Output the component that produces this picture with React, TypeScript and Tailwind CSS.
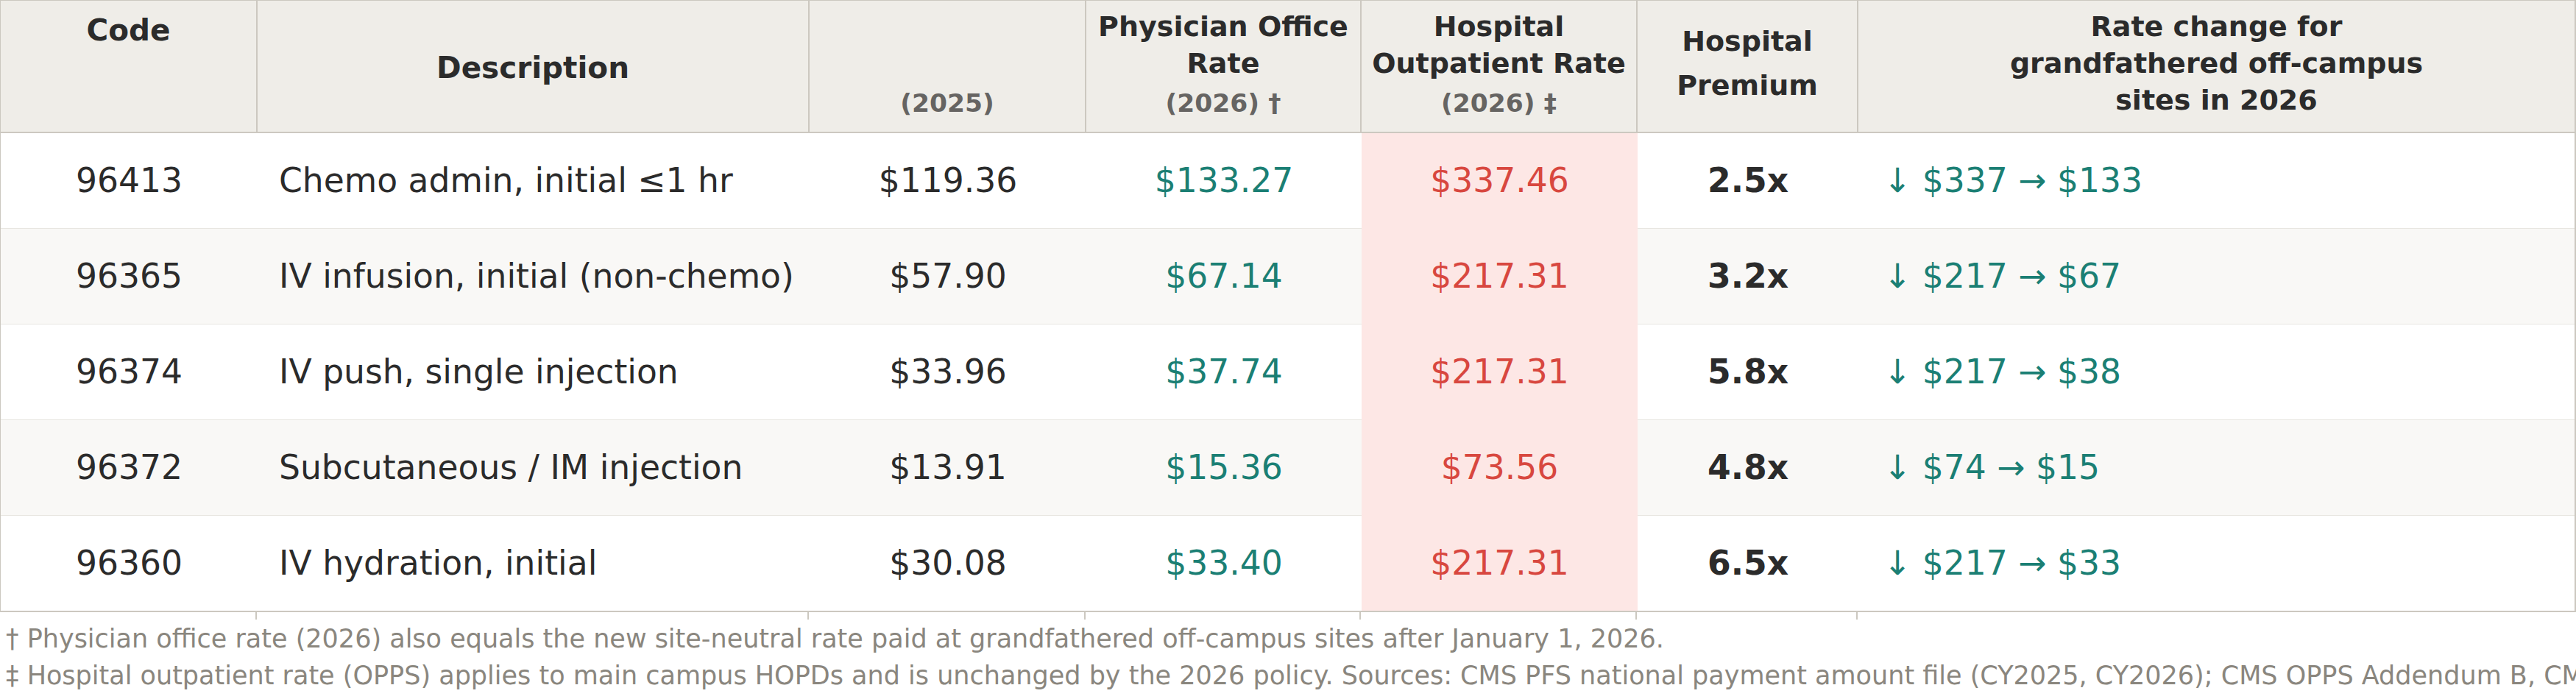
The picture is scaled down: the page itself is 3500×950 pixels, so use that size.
import React from "react";

type Row = {
  code: string;
  desc: string;
  y2025: string;
  office: string;
  hopd: string;
  premium: string;
  change: string;
};

const rows: Row[] = [
  { code: "96413", desc: "Chemo admin, initial ≤1 hr", y2025: "$119.36", office: "$133.27", hopd: "$337.46", premium: "2.5x", change: "↓ $337 → $133" },
  { code: "96365", desc: "IV infusion, initial (non-chemo)", y2025: "$57.90", office: "$67.14", hopd: "$217.31", premium: "3.2x", change: "↓ $217 → $67" },
  { code: "96374", desc: "IV push, single injection", y2025: "$33.96", office: "$37.74", hopd: "$217.31", premium: "5.8x", change: "↓ $217 → $38" },
  { code: "96372", desc: "Subcutaneous / IM injection", y2025: "$13.91", office: "$15.36", hopd: "$73.56", premium: "4.8x", change: "↓ $74 → $15" },
  { code: "96360", desc: "IV hydration, initial", y2025: "$30.08", office: "$33.40", hopd: "$217.31", premium: "6.5x", change: "↓ $217 → $33" },
];

const gridCols = "grid grid-cols-[349px_750px_376px_374px_375px_300px_1fr]";

export default function App() {
  return (
    <div
      className="w-[3500px] overflow-hidden bg-white text-[#2b2b2b]"
      style={{ fontFamily: '"DejaVu Sans", "Liberation Sans", sans-serif' }}
    >
      <div className="border-t border-l border-r-2 border-b-2 border-[#ccc8c0]">
        {/* Header */}
        <div className={`${gridCols} h-[180px] bg-[#efede8] border-b-2 border-[#ccc8c0] text-[38px] font-bold leading-[50px] text-center`}>
          <div className="border-r-2 border-[#ccc8c0] pt-[15px] text-[40.5px]">Code</div>
          <div className="border-r-2 border-[#ccc8c0] pt-[66px] text-[40.5px]">Description</div>
          <div className="border-r-2 border-[#ccc8c0] pt-[114px] text-[34.5px] text-[#666462]">(2025)</div>
          <div className="border-r-2 border-[#ccc8c0] pt-[10px] whitespace-nowrap">
            <div>Physician Office</div>
            <div>Rate</div>
            <div className="mt-[4px] text-[34.5px] text-[#666462]">(2026) †</div>
          </div>
          <div className="border-r-2 border-[#ccc8c0] pt-[10px] whitespace-nowrap">
            <div>Hospital</div>
            <div>Outpatient Rate</div>
            <div className="mt-[4px] text-[34.5px] text-[#666462]">(2026) ‡</div>
          </div>
          <div className="border-r-2 border-[#ccc8c0] pt-[25px] leading-[60px] whitespace-nowrap">
            <div>Hospital</div>
            <div>Premium</div>
          </div>
          <div className="pt-[10px] whitespace-nowrap">
            <div>Rate change for</div>
            <div>grandfathered off-campus</div>
            <div>sites in 2026</div>
          </div>
        </div>

        {/* Body */}
        {rows.map((r, i) => {
          const last = i === rows.length - 1;
          const bg = i % 2 === 1 ? "bg-[#f9f8f6]" : "bg-white";
          const bb = last ? "" : "border-b border-[#e8e6e1]";
          const h = last ? "h-[129px]" : "h-[130px]";
          return (
            <div key={r.code} className={`${gridCols} text-[45.6px] leading-none`}>
              <div className={`${h} ${bg} ${bb} flex items-center justify-center`}>{r.code}</div>
              <div className={`${h} ${bg} ${bb} flex items-center pl-[29px] whitespace-nowrap`}>{r.desc}</div>
              <div className={`${h} ${bg} ${bb} flex items-center justify-center`}>{r.y2025}</div>
              <div className={`${h} ${bg} ${bb} flex items-center justify-center text-[#1b7f74]`}>{r.office}</div>
              <div className={`${h} bg-[#fde7e5] ${last ? "" : "border-b border-[#fde7e5]"} flex items-center justify-center text-[#d8473f]`}>{r.hopd}</div>
              <div className={`${h} ${bg} ${bb} flex items-center justify-center font-bold`}>{r.premium}</div>
              <div className={`${h} ${bg} ${bb} flex items-center pl-[34px] whitespace-nowrap text-[#1b7f74]`}>{r.change}</div>
            </div>
          );
        })}
      </div>

      {/* tick row */}
      <div className={`${gridCols} h-[10px]`}>
        <div className="border-r-2 border-[#ccc8c0]" />
        <div className="border-r-2 border-[#ccc8c0]" />
        <div className="border-r-2 border-[#ccc8c0]" />
        <div className="border-r-2 border-[#ccc8c0]" />
        <div className="border-r-2 border-[#ccc8c0]" />
        <div className="border-r-2 border-[#ccc8c0]" />
        <div />
      </div>

      {/* Footnotes */}
      <div className="pl-[8px] pt-[1px] text-[35px] leading-[50px] text-[#8a867e] whitespace-nowrap">
        <div>† Physician office rate (2026) also equals the new site-neutral rate paid at grandfathered off-campus sites after January 1, 2026.</div>
        <div>‡ Hospital outpatient rate (OPPS) applies to main campus HOPDs and is unchanged by the 2026 policy. Sources: CMS PFS national payment amount file (CY2025, CY2026); CMS OPPS Addendum B, CMS CY2026 OPPS final rule.</div>
      </div>
    </div>
  );
}
